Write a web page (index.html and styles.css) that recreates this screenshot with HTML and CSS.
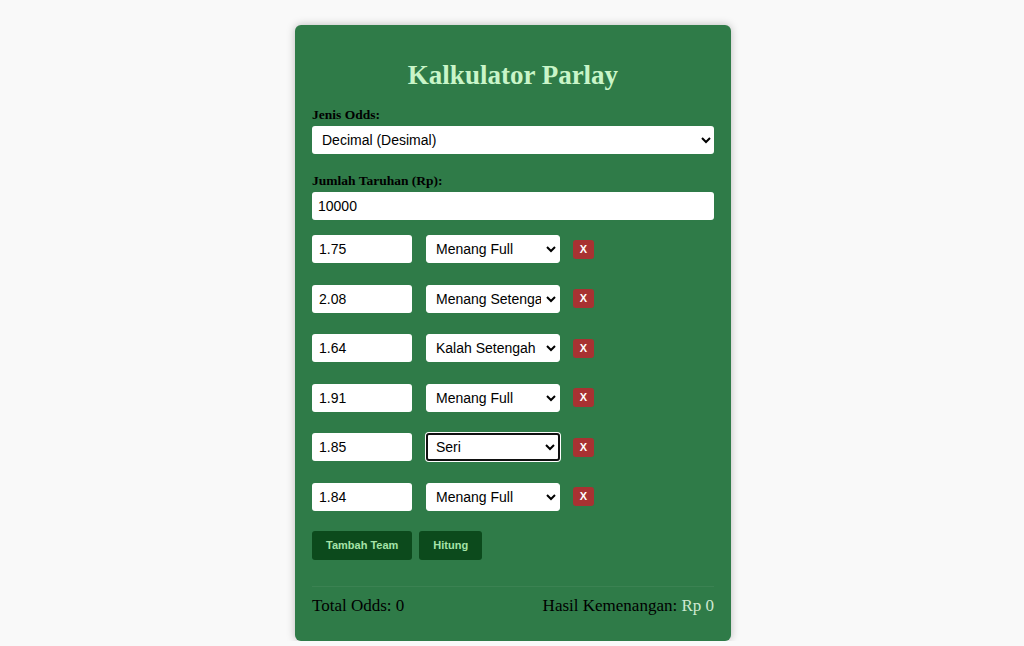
FILE: index.html
```html
<!DOCTYPE html>
<html lang="id">
<head>
<meta charset="utf-8">
<title>Kalkulator Parlay</title>
<link rel="stylesheet" href="styles.css">
</head>
<body>
<div class="card">
  <h2 class="title">Kalkulator Parlay</h2>
  <label class="label" for="jenis">Jenis Odds:</label>
  <select id="jenis" class="field">
    <option>Decimal (Desimal)</option>
  </select>
  <label class="label second" for="taruhan">Jumlah Taruhan (Rp):</label>
  <input id="taruhan" class="field text" type="text" value="10000">

  <div class="teams">
    <div class="team">
      <input class="odd" type="text" value="1.75">
      <select class="result"><option>Menang Full</option></select>
      <button class="remove">X</button>
    </div>
    <div class="team">
      <input class="odd" type="text" value="2.08">
      <select class="result"><option>Menang Setengah</option></select>
      <button class="remove">X</button>
    </div>
    <div class="team">
      <input class="odd" type="text" value="1.64">
      <select class="result"><option>Kalah Setengah</option></select>
      <button class="remove">X</button>
    </div>
    <div class="team">
      <input class="odd" type="text" value="1.91">
      <select class="result"><option>Menang Full</option></select>
      <button class="remove">X</button>
    </div>
    <div class="team">
      <input class="odd" type="text" value="1.85">
      <select class="result focused"><option>Seri</option></select>
      <button class="remove">X</button>
    </div>
    <div class="team">
      <input class="odd" type="text" value="1.84">
      <select class="result"><option>Menang Full</option></select>
      <button class="remove">X</button>
    </div>
  </div>

  <div class="actions">
    <button class="btn">Tambah Team</button>
    <button class="btn">Hitung</button>
  </div>

  <div class="summary">
    <span>Total Odds: 0</span>
    <span>Hasil Kemenangan: <span class="amount">Rp 0</span></span>
  </div>
</div>
</body>
</html>
```

FILE: styles.css
```css
html, body {
  margin: 0;
  padding: 0;
}
body {
  background: #f9f9f9;
  font-family: "Liberation Serif", "Times New Roman", serif;
  color: #000;
  padding-left: 2px;
}
.card {
  width: 402px;
  margin: 25px auto 0;
  padding: 17px 17px 17px;
  background: #2f7b48;
  border-radius: 6px;
  box-shadow: 0 0 8px rgba(0, 0, 0, 0.25);
  display: flex;
  flex-direction: column;
}
.title {
  margin: 18px 0 17px;
  font-size: 27px;
  line-height: 30px;
  font-weight: bold;
  text-align: center;
  color: #c9f5c8;
}
.label {
  display: block;
  font-size: 13.5px;
  line-height: 15px;
  font-weight: bold;
  margin-bottom: 4px;
}
.label.second {
  margin-top: 19px;
}
.field {
  box-sizing: border-box;
  width: 402px;
  height: 28px;
  border: none;
  border-radius: 3px;
  background: #fff;
  font-family: "Liberation Sans", Arial, sans-serif;
  font-size: 14px;
  color: #000;
  padding: 0 6px 0 6px;
  margin: 0;
}
.field.text {
  padding-left: 6px;
}
.teams {
  display: flex;
  flex-direction: column;
  gap: 21.5px;
  margin-top: 15px;
}
.team {
  display: flex;
  align-items: center;
  height: 28px;
}
.odd {
  box-sizing: border-box;
  width: 100px;
  height: 28px;
  border: none;
  border-radius: 3px;
  background: #fff;
  font-family: "Liberation Sans", Arial, sans-serif;
  font-size: 14px;
  padding: 0 7px;
  margin: 0 14px 0 0;
}
.result {
  box-sizing: border-box;
  width: 134px;
  height: 28px;
  border: 1px solid #fff;
  border-radius: 3px;
  background: #fff;
  font-family: "Liberation Sans", Arial, sans-serif;
  font-size: 14px;
  color: #000;
  padding: 0 2px 0 5px;
  margin: 0 13px 0 0;
}
.result.focused {
  border: 2px solid #111;
  padding-left: 4px;
  box-shadow: 0 0 0 1px #fff;
}
.remove {
  width: 21px;
  height: 19px;
  padding: 0;
  border: none;
  border-radius: 3px;
  background: #a83232;
  color: #fff;
  font-family: "Liberation Sans", Arial, sans-serif;
  font-size: 11px;
  font-weight: bold;
  line-height: 19px;
}
.actions {
  display: flex;
  gap: 7px;
  margin-top: 20px;
}
.btn {
  height: 29px;
  padding: 0 14px;
  border: none;
  border-radius: 3px;
  background: #0c4a1c;
  color: #a6e3a8;
  font-family: "Liberation Sans", Arial, sans-serif;
  font-size: 11px;
  font-weight: bold;
}
.summary {
  margin-top: 26px;
  border-top: 1px solid rgba(255, 255, 255, 0.06);
  padding: 9px 0 0;
  display: flex;
  justify-content: space-between;
  font-size: 17px;
  line-height: 20px;
  min-height: 28px;
}
.amount {
  color: #cfe9d2;
}
```
